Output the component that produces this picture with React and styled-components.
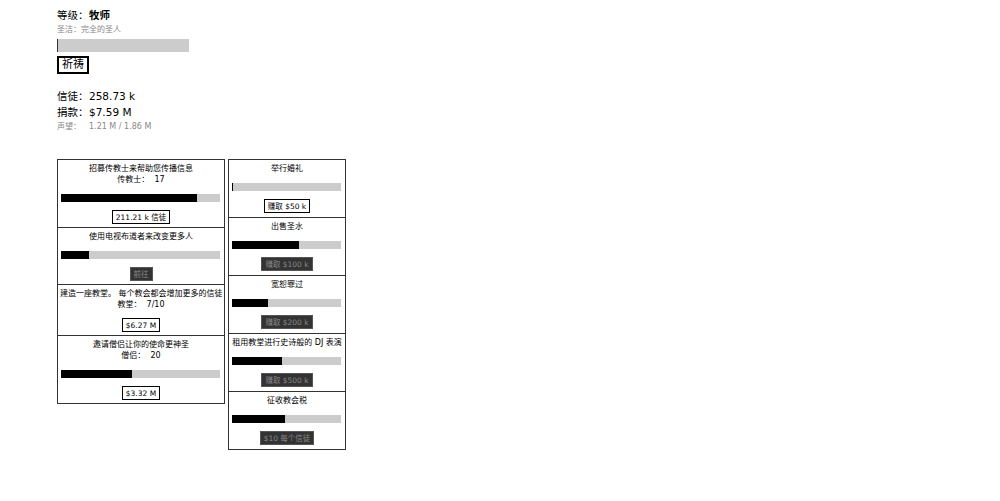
import React from 'react'
import styled, { createGlobalStyle } from 'styled-components'

const Global = createGlobalStyle`
  body {
    margin: 8px;
    background: #fff;
    color: #000;
    font-family: "DejaVu Sans", "Noto Sans CJK SC", sans-serif;
  }
`

const Page = styled.div`
  padding-left: 49px;
`

const StatRow = styled.div`
  display: grid;
  grid-template-columns: 32px auto;
  white-space: nowrap;
  font-size: ${p => (p.small ? '8px' : '10.5px')};
  line-height: ${p => (p.small ? '11px' : '14px')};
  color: ${p => (p.small ? '#888' : '#000')};
  margin-top: ${p => p.gap || 0}px;
`

const Value = styled.span`
  font-weight: ${p => (p.bold ? 'bold' : 'normal')};
`

const Note = styled.div`
  font-size: 8px;
  line-height: 11px;
  color: #888;
  margin-top: 2px;
`

const HolyBar = styled.div`
  width: 131px;
  height: 13px;
  margin-top: 4px;
  background: #ccc;
  border-left: 1px solid #333;
`

const PrayButton = styled.button`
  display: block;
  margin-top: 4px;
  padding: 0 3px;
  height: 18px;
  font-family: inherit;
  font-size: 11px;
  line-height: 14px;
  background: #fff;
  border: 2px solid #000;
  color: #000;
`

const Columns = styled.div`
  display: flex;
  align-items: flex-start;
  gap: 3px;
  margin-top: 27px;
`

const Column = styled.div`
  box-sizing: border-box;
  width: ${p => p.w}px;
  border: 1px solid #333;
`

const Card = styled.div`
  padding: 3px 2px ${p => p.bottom}px;
  text-align: center;
  font-size: 8px;
  line-height: 11px;
  white-space: nowrap;
  & + & {
    border-top: 1px solid #333;
  }
`

const Bar = styled.div`
  height: 8px;
  margin: 9px 2px 0 1px;
  background: #ccc;
  text-align: left;
`

const Fill = styled.div`
  height: 100%;
  background: #000;
`

const Action = styled.button`
  margin-top: 8px;
  height: 14px;
  padding: 0 3px;
  font-family: inherit;
  font-size: 7.5px;
  line-height: 11px;
  background: ${p => (p.off ? '#333' : '#fff')};
  color: ${p => (p.off ? '#888' : '#000')};
  border: 1px solid ${p => (p.off ? '#555' : '#000')};
`

const left = [
  { title: '招募传教士来帮助您传播信息', count: '传教士：  17', fill: 85.5, btn: '211.21 k 信徒' },
  { title: '使用电视布道者来改变更多人', fill: 17.5, btn: '前往', off: true },
  { title: '建造一座教堂。 每个教会都会增加更多的信徒', count: '教堂：  7/10', btn: '$6.27 M' },
  { title: '邀请僧侣让你的使命更神圣', count: '僧侣：  20', fill: 44.5, btn: '$3.32 M' },
]

const right = [
  { title: '举行婚礼', fill: 1, btn: '赚取 $50 k' },
  { title: '出售圣水', fill: 61.5, btn: '赚取 $100 k', off: true },
  { title: '宽恕罪过', fill: 33, btn: '赚取 $200 k', off: true },
  { title: '租用教堂进行史诗般的 DJ 表演', fill: 46, btn: '赚取 $500 k', off: true },
  { title: '征收教会税', fill: 49, btn: '$10 每个信徒', off: true },
]

const Item = ({ val, bottom }) => (
  <Card bottom={bottom}>
    <div>{val.title}</div>
    {val.count && <div style={{ whiteSpace: 'pre' }}>{val.count}</div>}
    {val.fill !== undefined && (
      <Bar>
        <Fill style={{ width: `${val.fill}%` }} />
      </Bar>
    )}
    <Action off={val.off}>{val.btn}</Action>
  </Card>
)

const App = () => (
  <Page>
    <Global />
    <StatRow>
      <span>等级：</span>
      <Value bold>牧师</Value>
    </StatRow>
    <Note>圣洁：完全的圣人</Note>
    <HolyBar />
    <PrayButton>祈祷</PrayButton>
    <StatRow gap={15}>
      <span>信徒：</span>
      <Value>258.73 k</Value>
    </StatRow>
    <StatRow gap={2}>
      <span>捐款：</span>
      <Value>$7.59 M</Value>
    </StatRow>
    <StatRow small gap={2}>
      <span>声望：</span>
      <Value>1.21 M / 1.86 M</Value>
    </StatRow>
    <Columns>
      <Column w={168}>
        {left.map((val, ind) => <Item key={ind} val={val} bottom={3} />)}
      </Column>
      <Column w={118}>
        {right.map((val, ind) => <Item key={ind} val={val} bottom={4} />)}
      </Column>
    </Columns>
  </Page>
)

export default App
